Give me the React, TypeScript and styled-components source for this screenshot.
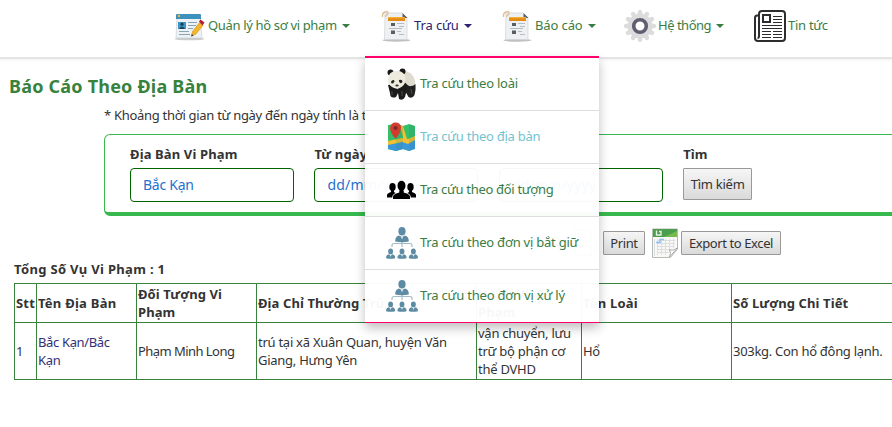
import React from "react";
import styled, { createGlobalStyle } from "styled-components";

const Global = createGlobalStyle`
  * { box-sizing: border-box; }
  body {
    margin: 0;
    background: #fff;
    overflow: hidden;
    color: #333;
    font: 13px/18px "Noto Sans", "Open Sans", sans-serif;
  }
`;

const Page = styled.div`
  width: 892px;
  height: 427px;
  overflow: hidden;
`;

const Header = styled.header`
  height: 59px;
  border-bottom: 2px solid #e5e5e5;
  box-shadow: 0 1px 3px rgba(0, 0, 0, 0.06);
`;

const Nav = styled.nav`
  display: flex;
  padding-left: 174px;
  height: 52px;
`;

const NavItem = styled.div<{ $width: number; $color?: string }>`
  position: relative;
  display: flex;
  align-items: center;
  width: ${(p) => p.$width}px;
  color: ${(p) => p.$color ?? "#3a7d44"};
`;

const Text = styled.span<{ $spacing?: number }>`
  letter-spacing: ${(p) => p.$spacing ?? -0.27}px;
  white-space: nowrap;
`;

const NavText = styled(Text)`
  margin-left: 2px;
  padding-bottom: 2px;
`;

const Caret = styled.i`
  margin-left: 5px;
  border: 4px solid transparent;
  border-top-color: currentColor;
  border-bottom: 0;
`;

const Menu = styled.div`
  position: absolute;
  z-index: 2;
  top: 56px;
  left: -16px;
  width: 234px;
  border-top: 2px solid #ff006a;
  box-shadow: 0 5px 10px rgba(0, 0, 0, 0.25);
`;

const MenuItem = styled.div<{ $active?: boolean }>`
  display: flex;
  align-items: center;
  height: 53px;
  padding-left: 21px;
  background: rgba(255, 255, 255, ${(p) => (p.$active ? 1 : 0.965)});
  border-bottom: 1px solid #ddd;
  color: ${(p) => (p.$active ? "#72c3d0" : "#3a7d44")};
  &:last-child {
    border-bottom-color: #ff006a;
  }
`;

const MenuText = styled(Text)`
  margin-left: 2px;
  padding-bottom: 2px;
`;

const Title = styled.h1`
  margin: 14px 0 0 9px;
  font-size: 18px;
  line-height: 26px;
  color: #37823c;
`;

const Hint = styled.p`
  margin: 7px 0 0 104px;
  height: 28px;
`;

const Search = styled.section`
  display: flex;
  gap: 20px;
  margin-left: 104px;
  width: 800px;
  height: 82px;
  padding: 10px 0 0 25px;
  border: 1px solid #37b94f;
  border-bottom-width: 4px;
  border-radius: 6px;
`;

const Field = styled.div`
  width: 164.4px;
  font-weight: bold;
`;

const Input = styled.div`
  display: flex;
  align-items: center;
  width: 164px;
  height: 34px;
  margin-top: 5px;
  padding-left: 12px;
  border: 1px solid #006400;
  border-radius: 4px;
  font-size: 14px;
  font-weight: normal;
  color: #1f70d0;
`;

const Button = styled.button<{ $width: number; $height: number }>`
  display: flex;
  align-items: center;
  justify-content: center;
  width: ${(p) => p.$width}px;
  height: ${(p) => p.$height}px;
  padding: 0;
  border: 1px solid #999;
  border-radius: 1px;
  background: linear-gradient(#f6f6f6, #dadada);
  color: #333;
  font: inherit;
  font-weight: normal;
`;

const SearchButton = styled(Button)`
  margin-top: 5px;
`;

const Actions = styled.div`
  display: flex;
  align-items: center;
  height: 32px;
  margin: 11px 0 0 568px;
`;

const PrintButton = styled(Button)`
  margin: 0 7px 0 5px;
`;

const ExcelButton = styled(Button)`
  margin-left: 3px;
`;

const Total = styled.div`
  margin: 1px 0 0 14px;
  height: 23px;
  font-weight: bold;
`;

const Table = styled.div`
  display: grid;
  grid-template-columns: 22px 100px 120px 220px 105px 150px 180px;
  grid-template-rows: 39px 57px;
  width: 898px;
  margin-left: 14px;
  border: solid #37823c;
  border-width: 1px 0 0 1px;
`;

const Cell = styled.div<{ $head?: boolean; $link?: boolean }>`
  display: flex;
  flex-direction: column;
  justify-content: center;
  padding-left: 1px;
  border: solid #37823c;
  border-width: 0 1px 1px 0;
  font-weight: ${(p) => (p.$head ? "bold" : "normal")};
  color: ${(p) => (p.$link ? "#332f78" : "#333")};
`;

const CardIcon = () => (
  <svg width="32" height="32" viewBox="0 0 32 32">
    <ellipse cx="15.5" cy="29" rx="15" ry="1.3" fill="#ccc" />
    <path d="M3 6h23l2 22H2z" fill="#edf2f5" stroke="#c5cdd2" strokeWidth=".6" />
    <path d="M2 5q0-1 1-1h23q1 0 1 1v4H2z" fill="#3d91bd" />
    <circle cx="5" cy="6" r="1.2" fill="#f4b43c" />
    <path d="M4 12h8v7H4z" fill="#3c94c2" />
    <circle cx="8" cy="14.2" r="1.6" fill="#17415c" />
    <path d="M5 19q3-5 6 0z" fill="#17415c" />
    <path d="M14 12.5h9M14 15.5h8M14 18.5h5M5 21.5h10M5 24.5h11" stroke="#8ba3b6" />
    <path d="m18.5 21.5 7-9 3.5 3-7.5 9-4 1.5z" fill="#f5b528" stroke="#c48a1a" strokeWidth=".5" />
    <path d="m25 11.5 1.5-2 4 3-2 3z" fill="#b82032" />
    <path d="m17.2 26.5.6-2.5 1.7 1.7z" fill="#333" />
  </svg>
);

const ReportIcon = () => (
  <svg width="31" height="32" viewBox="0 0 31 32">
    <ellipse cx="15.5" cy="30.3" rx="14" ry="1.5" fill="#c0c0c0" />
    <path d="M4 3h17l5 5v21.5H3.5z" fill="#eff0f2" stroke="#cfd2d5" strokeWidth=".7" />
    <path d="M21.5 3v5h5z" fill="#566067" />
    <path d="M7 7.500h17v3.500H7z" fill="#e38b16" />
    <path d="M7 7h17v1.300H7z" fill="#f4ad35" />
    <path d="M10 13h4v3h-4zM10 20.500h4v3.500h-4z" fill="#565e66" />
    <path d="M16 13.500h7M18 16.500h5M8 18.500h13M16 21.500h4M18 24.500h5" stroke="#b5bcc3" />
    <path d="M1.500 7Q1 3 4 2t3 1-3 3.500" fill="none" stroke="#dfc095" strokeWidth="1.4" />
  </svg>
);

const teeth = Array.from({ length: 12 }, (_, i) => i * 30);
const GearIcon = () => (
  <svg width="32" height="32" viewBox="0 0 32 32">
    <g fill="#dcdcdc">
      {teeth.map((a) => (
        <rect key={a} x="13.8" y="0" width="4.4" height="8" rx="2" transform={`rotate(${a} 16 16)`} />
      ))}
      <circle cx="16" cy="16" r="12.5" />
    </g>
    <circle cx="16" cy="16" r="6.3" fill="#fff" stroke="#625d70" strokeWidth="3.6" />
  </svg>
);

const NewsIcon = () => (
  <svg width="32" height="32" viewBox="0 0 32 32" fill="none" stroke="#2d2d2f">
    <path
      d="M5 5.5H3Q1 5.5 1 8v20q0 3 3 3h24q3 0 3-3V4q0-3-3-3H8Q5 1 5 4v22q0 2-1.5 2"
      strokeWidth="2"
    />
    <path d="M9 5h7v7H9z" strokeWidth="2" />
    <path d="M19 6.5h9M19 9.5h9M19 12.5h9M8 15.5h20M8 18.5h20M8 21.5h9M19 21.5h9M8 24.5h9M19 24.5h9M8 27.5h9M19 27.5h9" />
  </svg>
);

const PandaIcon = () => (
  <svg width="32" height="32" viewBox="0 0 32 32">
    <path d="M17 3q9 0 12 9l.5 9-6 3-9-8z" fill="#dedccf" />
    <path d="M18 13q4 6 7 5 3 0 4.500-2 .5 6-1 11-2 4-6 2l-4-7z" fill="#20201f" />
    <path d="M2 17q8-2 17-2l2 6q-1 4-2 8-2 4-6 2l-1-6-2 4q-6 2-6-4z" fill="#1b1b1b" />
    <circle cx="4.5" cy="4.5" r="3" fill="#181818" />
    <circle cx="16.5" cy="3.5" r="3" fill="#181818" />
    <path d="M2 12q0-9 9-9 8.5 0 8.5 8.500 0 7-8 9.500Q2 19 2 12" fill="#ecebdd" />
    <path d="M5.500 13q2.500-2 3 .5l-1.500 2q-3 0-1.500-2.500M13 12q3.500-1 3.500 2-2 2.500-3.500-.5z" fill="#222" />
    <ellipse cx="11" cy="17.500" rx="1.700" ry="1.100" fill="#333" />
    <path d="M6 23v4M16 23v5M25 21l1 5" stroke="#4d4d4a" />
  </svg>
);

const MapIcon = () => (
  <svg width="32" height="32" viewBox="0 0 32 32">
    <path d="m2 4 8-1 7 2 6-2 6 2v22l-6 3-6-2-7 2-8-2z" fill="#35bf68" />
    <path d="m2 22 8 1 7-3 6 1 6-3v10l-6 2-6-2-7 2-8-2z" fill="#3d98da" />
    <path d="m14 4 3 1 4 13-3 2zM2 20l14-3 6 1 7-3v4l-7 4-6-2-14 3z" fill="#f2c032" />
    <path d="m23 3 6 2v23l-6 2zM10 3l7 2v23l-7 2z" fill="#126f87" opacity=".13" />
    <path d="M9.5 18Q4 11 4 7q1-5.5 5.5-5.5Q15 1.5 15 7q0 4-5.5 11" fill="#d43b2f" />
    <circle cx="9.5" cy="7" r="2.1" fill="#7c2926" />
  </svg>
);

const PeopleIcon = () => (
  <svg width="32" height="32" viewBox="0 0 32 32">
    <ellipse cx="6.5" cy="13" rx="3.2" ry="4" />
    <path d="M5 16h3v2l3 2v3.5H1V21q0-1.500 4-3z" />
    <ellipse cx="24.5" cy="13" rx="3.2" ry="4" />
    <path d="M23 16h3v2q4 1.500 4 3v2.500H20V20l3-2z" />
    <g stroke="#fff" strokeWidth="1.4" paintOrder="stroke">
      <path d="M13.500 16h4v2.500q6 1.500 6.500 4V25H7v-2.500q.5-2.500 6.500-4z" />
      <ellipse cx="15.5" cy="11.8" rx="4" ry="5" />
    </g>
    <path d="M13.500 15h4v4h-4z" />
  </svg>
);

const Person = ({ x, y, s }: { x: number; y: number; s: number }) => (
  <g transform={`translate(${x} ${y}) scale(${s})`}>
    <ellipse cx="0" cy="4.3" rx="3.6" ry="4.3" />
    <path d="M-6.8 14.500q-.2-5 3.800-6L0 10l3-1.500q4 1 3.800 6-6.800 1.600-13.600 0" />
    <path d="m-1.300 9.200h2.600L0 12.500z" fill="#dbe6ec" />
  </g>
);

const OrgIcon = () => (
  <svg width="32" height="32" viewBox="0 0 32 32" fill="#5d8ba3">
    <path d="M6 20v-1.500q0-2 2-2h16q2 0 2 2V20M16 15v5" fill="none" stroke="#a3bbc8" strokeWidth="1.2" />
    <Person x={16} y={0} s={1} />
    <Person x={4.6} y={21.5} s={0.67} />
    <Person x={16} y={21.5} s={0.67} />
    <Person x={27.4} y={21.5} s={0.67} />
  </svg>
);

const PrinterIcon = () => (
  <svg width="30" height="30" viewBox="0 0 30 30" fill="none" stroke="#b9c0c8" strokeWidth="2">
    <path d="M7 12V2h13l3 3v7M7 22H2v-9h26v9h-5M7 18h16v9H7zM10 6h9M10 9h9" />
  </svg>
);

const ExcelIcon = () => (
  <svg width="26" height="30" viewBox="0 0 26 30">
    <path d="M.5 1h25v20l-7 8.500H.5z" fill="#f8f8f7" stroke="#b7bdb4" />
    <path d="M1 1h24v8H1z" fill="#4b9e4d" />
    <path d="M12 9 25 3v6z" fill="#75bb50" />
    <path d="M4.500 2.500v4.500h4.500V3.500H7" fill="none" stroke="#e3f4df" strokeWidth="1.4" />
    <path d="M5 12.500h18M5 15.500h18M5 18.500h17M5 21.500h14M5 24.500h12M2.500 11v17M5.500 11v16M9.500 11v16M13.500 11v16M17.500 11v12M21.500 11v9" stroke="#dcdee0" />
    <path d="M4 14.500h4v-3h4" fill="none" stroke="#8fbcf3" strokeWidth="1.4" />
    <path d="M17.500 29q2-4 0-7 4 1 8-2z" fill="#fff" stroke="#999" strokeWidth=".8" />
  </svg>
);

const menu = [
  { label: "Tra cứu theo loài", icon: <PandaIcon />, spacing: -0.24 },
  { label: "Tra cứu theo địa bàn", icon: <MapIcon />, spacing: -0.26, active: true },
  { label: "Tra cứu theo đối tượng", icon: <PeopleIcon />, spacing: -0.31 },
  { label: "Tra cứu theo đơn vị bắt giữ", icon: <OrgIcon />, spacing: -0.23 },
  { label: "Tra cứu theo đơn vị xử lý", icon: <OrgIcon />, spacing: -0.2 },
];

const heads = [
  { lines: ["Stt"], spacing: 0.2 },
  { lines: ["Tên Địa Bàn"], spacing: 0.25 },
  { lines: ["Đối Tượng Vi", "Phạm"], spacing: 0.1 },
  { lines: ["Địa Chỉ Thường Trú"], spacing: 0.1 },
  { lines: ["Hành Vi Vi", "Phạm"], spacing: 0.1 },
  { lines: ["Tên Loài"], spacing: 0.2 },
  { lines: ["Số Lượng Chi Tiết"], spacing: 0.1 },
];

const row = [
  { lines: ["1"], spacing: 0 },
  { lines: ["Bắc Kạn/Bắc", "Kạn"], spacing: -0.35 },
  { lines: ["Phạm Minh Long"], spacing: -0.55 },
  { lines: ["trú tại xã Xuân Quan, huyện Văn", "Giang, Hưng Yên"], spacing: -0.26 },
  { lines: ["vận chuyển, lưu", "trữ bộ phận cơ", "thể DVHD"], spacing: -0.25 },
  { lines: ["Hổ"], spacing: -0.3 },
  { lines: ["303kg. Con hổ đông lạnh."], spacing: -0.29 },
];

export default function App() {
  return (
    <Page>
      <Global />
      <Header>
        <Nav>
          <NavItem $width={207}>
            <CardIcon />
            <NavText $spacing={-0.34}>Quản lý hồ sơ vi phạm</NavText>
            <Caret />
          </NavItem>
          <NavItem $width={121} $color="#2b2372">
            <ReportIcon />
            <NavText $spacing={-0.1}>Tra cứu</NavText>
            <Caret />
            <Menu>
              {menu.map((m) => (
                <MenuItem key={m.label} $active={m.active}>
                  {m.icon}
                  <MenuText $spacing={m.spacing}>{m.label}</MenuText>
                </MenuItem>
              ))}
            </Menu>
          </NavItem>
          <NavItem $width={122}>
            <ReportIcon />
            <NavText $spacing={-0.12}>Báo cáo</NavText>
            <Caret />
          </NavItem>
          <NavItem $width={130}>
            <GearIcon />
            <NavText $spacing={-0.48}>Hệ thống</NavText>
            <Caret />
          </NavItem>
          <NavItem $width={90}>
            <NewsIcon />
            <NavText>Tin tức</NavText>
          </NavItem>
        </Nav>
      </Header>
      <Title>
        <Text $spacing={0.21}>Báo Cáo Theo Địa Bàn</Text>
      </Title>
      <Hint>
        <Text $spacing={-0.29}>* Khoảng thời gian từ ngày đến ngày tính là t</Text>
      </Hint>
      <Search>
        <Field>
          <Text $spacing={0.13}>Địa Bàn Vi Phạm</Text>
          <Input>
            <Text>Bắc Kạn</Text>
          </Input>
        </Field>
        <Field>
          <Text $spacing={0.13}>Từ ngày</Text>
          <Input>
            <Text $spacing={0.2}>dd/mm/yyyy</Text>
          </Input>
        </Field>
        <Field>
          <Text $spacing={0.13}>Đến ngày</Text>
          <Input>
            <Text $spacing={0.2}>dd/mm/yyyy</Text>
          </Input>
        </Field>
        <Field>
          <Text $spacing={0.1}>Tìm</Text>
          <SearchButton $width={69} $height={32}>
            <Text>Tìm kiếm</Text>
          </SearchButton>
        </Field>
      </Search>
      <Actions>
        <PrinterIcon />
        <PrintButton $width={42} $height={24}>
          <Text $spacing={-0.4}>Print</Text>
        </PrintButton>
        <ExcelIcon />
        <ExcelButton $width={100} $height={24}>
          <Text $spacing={-0.4}>Export to Excel</Text>
        </ExcelButton>
      </Actions>
      <Total>
        <Text $spacing={0.33}>Tổng Số Vụ Vi Phạm : 1</Text>
      </Total>
      <Table>
        {heads.map(({ lines, spacing }, i) => (
          <Cell key={i} $head>
            {lines.map((l) => (
              <Text key={l} $spacing={spacing}>
                {l}
              </Text>
            ))}
          </Cell>
        ))}
        {row.map(({ lines, spacing }, i) => (
          <Cell key={i} $link={i === 1}>
            {lines.map((l) => (
              <Text key={l} $spacing={spacing}>
                {l}
              </Text>
            ))}
          </Cell>
        ))}
      </Table>
    </Page>
  );
}
